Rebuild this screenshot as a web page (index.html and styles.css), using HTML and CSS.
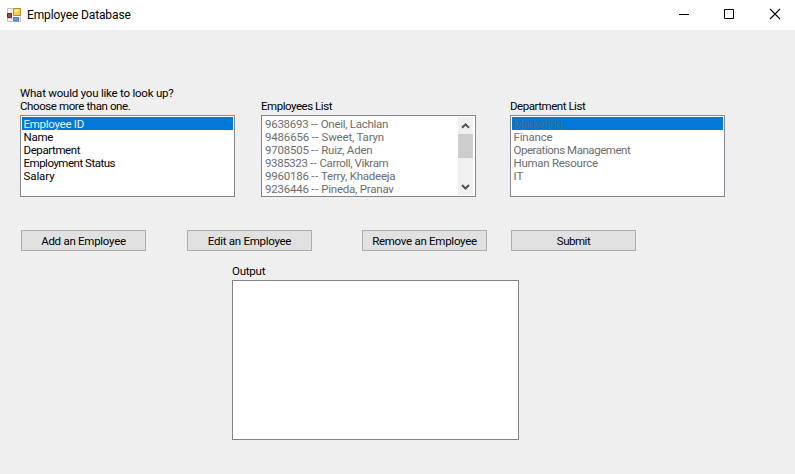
FILE: index.html
```html
<!DOCTYPE html>
<html lang="en">
<head>
<meta charset="utf-8">
<title>Employee Database</title>
<link rel="stylesheet" href="styles.css">
</head>
<body>
<header class="titlebar">
  <svg class="app-icon" width="14" height="14" viewBox="0 0 14 14">
    <path d="M.5.5h13v13H.5z" fill="#fff" stroke="#c3c3c6"/>
    <path d="M4 1v12M1 10.5h12" stroke="#d5d5da"/>
    <path d="M6.5.5h7v7h-7z" fill="#f6d04e" stroke="#b98c22"/>
    <path d="M7.5 1.5h4v2h-4z" fill="#ffec94"/>
    <path d="M.5 5.5h4v4h-4z" fill="#b5484d" stroke="#701d22"/>
    <path d="M6.5 9.5h5v3.500h-5z" fill="#6c9cdf" stroke="#4c77b8"/>
  </svg>
  <h1>Employee Database</h1>
  <svg class="controls" width="111" height="30" viewBox="0 0 111 30" fill="none" stroke="#000">
    <path d="M4 14.500h10"/>
    <path d="M49.500 9.500h9v9h-9z"/>
    <path d="m95 9 10 10m0-10L95 19" stroke-width="1.100"/>
  </svg>
</header>
<main>
  <div class="lists">
    <section>
      <p class="label"><span class="t22">What would you like to look up?</span><br><span class="t40">Choose more than one.</span></p>
      <ul class="listbox">
        <li class="selected t27">Employee ID</li>
        <li class="t27">Name</li>
        <li class="t40">Department</li>
        <li class="t49">Employment Status</li>
        <li class="t10">Salary</li>
      </ul>
    </section>
    <section>
      <p class="label t46">Employees List</p>
      <div class="listbox scrollable">
        <ul class="disabled">
          <li class="t27">9638693 <span class="dash">--</span> Oneil, Lachlan</li>
          <li class="t18">9486656 <span class="dash">--</span> Sweet, Taryn</li>
          <li class="t22">9708505 <span class="dash">--</span> Ruiz, Aden</li>
          <li class="t40">9385323 <span class="dash">--</span> Carroll, Vikram</li>
          <li class="t22">9960186 <span class="dash">--</span> Terry, Khadeeja</li>
          <li class="t22">9236446 <span class="dash">--</span> Pineda, Pranav</li>
        </ul>
        <div class="scrollbar">
          <svg width="15" height="17" viewBox="0 0 15 17"><path d="m4 10.800 3.500-3.500 3.500 3.500" fill="none" stroke="#505050" stroke-width="2"/></svg>
          <div class="thumb"></div>
          <svg class="down" width="15" height="17" viewBox="0 0 15 17"><path d="m4 7 3.500 3.500L11 7" fill="none" stroke="#505050" stroke-width="2"/></svg>
        </div>
      </div>
    </section>
    <section>
      <p class="label t46">Department List</p>
      <ul class="listbox disabled">
        <li class="selected t34">Marketing</li>
        <li class="t18">Finance</li>
        <li class="t46">Operations Management</li>
        <li class="t27">Human Resource</li>
        <li>IT</li>
      </ul>
    </section>
  </div>
  <div class="buttons">
    <button class="t27">Add an Employee</button>
    <button class="t27">Edit an Employee</button>
    <button class="t27">Remove an Employee</button>
    <button class="t49">Submit</button>
  </div>
  <section class="output">
    <p class="label t22">Output</p>
    <div class="output-box"></div>
  </section>
</main>
</body>
</html>
```
FILE: styles.css
```css
* { box-sizing: border-box; margin: 0; padding: 0; }
body {
  width: 795px;
  height: 474px;
  overflow: hidden;
  background: #efefef;
  color: #000;
  font: 11.5px/13px Roboto, "Liberation Sans", sans-serif;
  white-space: nowrap;
}
.titlebar {
  display: flex;
  align-items: center;
  height: 30px;
  padding-left: 7px;
  background: #fff;
}
h1 { margin-left: 6px; font-size: 12px; font-weight: 400; letter-spacing: -.12px; }
.controls { margin-left: auto; margin-right: 9px; }
.app-icon { margin-top: -1px; }

.lists {
  display: grid;
  grid-template-columns: 215px 215px 215px;
  column-gap: 26px;
  align-items: end;
  height: 167px;
  padding-left: 20px;
}
.lists section:last-child { margin-left: 8px; margin-right: -8px; }
.label { margin-bottom: 2px; }
.listbox {
  height: 82px;
  padding: 1px;
  border: 1px solid #828790;
  background: #fff;
}
ul { list-style: none; }
li { height: 13px; padding-left: 1.5px; line-height: 15px; }
.disabled { color: #6d6d6d; }
.selected { background: #0078d7; color: #e6f6ff; }
.disabled .selected { color: #4d6a85; }
.scrollable { display: flex; justify-content: space-between; }
.scrollable li { padding-left: 2px; }
.dash { letter-spacing: .4px; }
.scrollbar {
  display: flex;
  flex-direction: column;
  width: 15px;
  margin-right: 1px;
  background: #f0f0f0;
}
.thumb { height: 24px; background: #cdcdcd; }
.down { margin-top: auto; }

.buttons { display: flex; padding: 33px 0 0 21px; }
button {
  width: 125px;
  height: 21px;
  padding-top: 2px;
  border: 1px solid #adadad;
  background: #e1e1e1;
  color: #000;
  font: inherit;
}
button:nth-child(2) { margin-left: 41px; }
button:nth-child(3) { margin-left: 50px; }
button:nth-child(4) { margin-left: 24px; }

.output { width: 287px; margin: 14px 0 0 232px; }
.output-box { height: 160px; border: 1px solid #828282; background: #fff; }

/* Tracking steps, in hundredths of a pixel */
.t10 { letter-spacing: -.1px; }
.t18 { letter-spacing: -.18px; }
.t22 { letter-spacing: -.22px; }
.t27 { letter-spacing: -.27px; }
.t34 { letter-spacing: -.34px; }
.t40 { letter-spacing: -.4px; }
.t46 { letter-spacing: -.46px; }
.t49 { letter-spacing: -.49px; }
```
